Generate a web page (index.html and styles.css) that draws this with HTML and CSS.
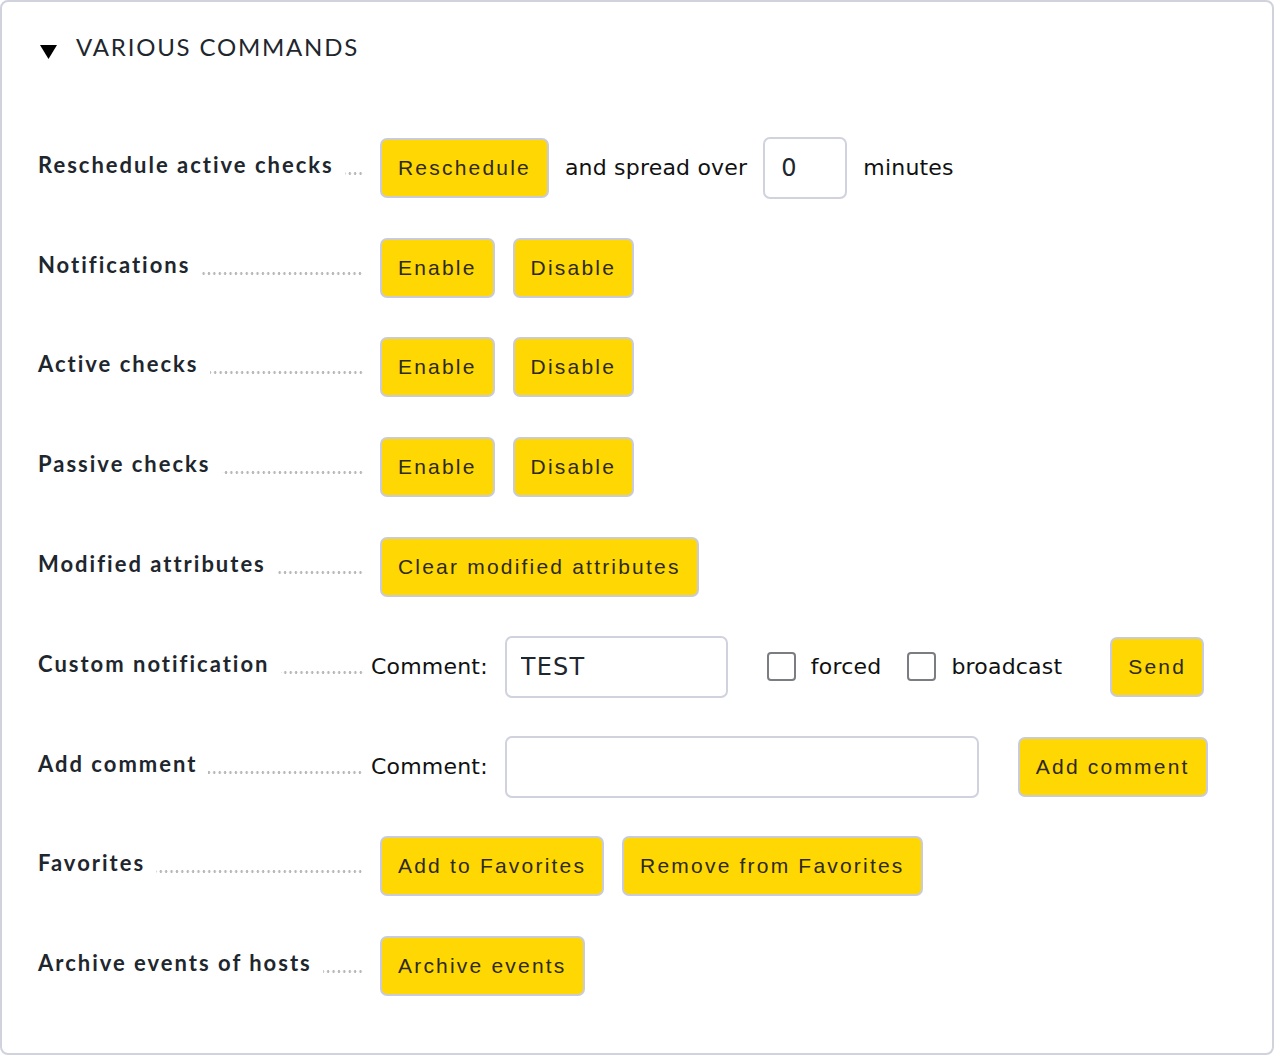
FILE: index.html
```html
<!DOCTYPE html>
<html>
<head>
<meta charset="utf-8">
<link rel="stylesheet" href="styles.css">
</head>
<body>
<div class="panel">
  <div class="header">
    <svg class="tri" width="17" height="14" viewBox="0 0 17 14"><polygon points="0,0 17,0 8.5,14" fill="#000"/></svg>
    <span class="title">VARIOUS COMMANDS</span>
  </div>
  <div class="rows">
    <div class="row">
      <div class="label"><span class="ltext">Reschedule active checks</span><span class="dots"></span></div>
      <div class="content">
        <button class="btn first">Reschedule</button>
        <span class="txt m16">and spread over</span>
        <input class="inp w-num m16" value="0">
        <span class="txt m16">minutes</span>
      </div>
    </div>
    <div class="row">
      <div class="label"><span class="ltext">Notifications</span><span class="dots"></span></div>
      <div class="content">
        <button class="btn first">Enable</button>
        <button class="btn m18">Disable</button>
      </div>
    </div>
    <div class="row">
      <div class="label"><span class="ltext">Active checks</span><span class="dots"></span></div>
      <div class="content">
        <button class="btn first">Enable</button>
        <button class="btn m18">Disable</button>
      </div>
    </div>
    <div class="row">
      <div class="label"><span class="ltext">Passive checks</span><span class="dots"></span></div>
      <div class="content">
        <button class="btn first">Enable</button>
        <button class="btn m18">Disable</button>
      </div>
    </div>
    <div class="row">
      <div class="label"><span class="ltext">Modified attributes</span><span class="dots"></span></div>
      <div class="content">
        <button class="btn first">Clear modified attributes</button>
      </div>
    </div>
    <div class="row">
      <div class="label"><span class="ltext">Custom notification</span><span class="dots"></span></div>
      <div class="content">
        <span class="txt">Comment:</span>
        <input class="inp w-test m17" value="TEST">
        <input type="checkbox" class="chk m39">
        <span class="txt m15">forced</span>
        <input type="checkbox" class="chk m26">
        <span class="txt m15">broadcast</span>
        <button class="btn m48">Send</button>
      </div>
    </div>
    <div class="row">
      <div class="label"><span class="ltext">Add comment</span><span class="dots"></span></div>
      <div class="content">
        <span class="txt">Comment:</span>
        <input class="inp w-comment m17" value="">
        <button class="btn m39">Add comment</button>
      </div>
    </div>
    <div class="row">
      <div class="label"><span class="ltext">Favorites</span><span class="dots"></span></div>
      <div class="content">
        <button class="btn first">Add to Favorites</button>
        <button class="btn m18">Remove from Favorites</button>
      </div>
    </div>
    <div class="row">
      <div class="label"><span class="ltext">Archive events of hosts</span><span class="dots"></span></div>
      <div class="content">
        <button class="btn first">Archive events</button>
      </div>
    </div>
  </div>
</div>
</body>
</html>
```
FILE: styles.css
```css
html, body {
  margin: 0;
  padding: 0;
  background: #fff;
}

.panel {
  box-sizing: border-box;
  width: 1274px;
  height: 1055px;
  border: 2px solid #d0d2de;
  border-radius: 8px;
  background: #fff;
}

.header {
  display: flex;
  align-items: center;
  padding: 31px 0 0 38px;
}

.tri {
  margin: 9px 0 0 0;
  display: block;
}

.title {
  margin-left: 19px;
  font-family: "Lato", sans-serif;
  font-size: 24px;
  letter-spacing: 1.8px;
  color: #1e262e;
  line-height: 1.2;
}

.rows {
  display: flex;
  flex-direction: column;
  gap: 37.8px;
  margin-top: 75px;
  padding-left: 36px;
}

.row {
  display: flex;
  align-items: flex-start;
}

.label {
  width: 325px;
  display: flex;
  align-items: flex-start;
  padding-top: 15px;
  flex-shrink: 0;
}

.ltext {
  font-family: "Lato", sans-serif;
  font-weight: bold;
  font-size: 22px;
  letter-spacing: 2px;
  line-height: 1.2;
  color: #1e262e;
  white-space: nowrap;
}

.dots {
  flex: 1;
  height: 3px;
  margin: 20px 0 0 11px;
  background-image: radial-gradient(circle, #b8b8b8 1.1px, transparent 1.5px);
  background-size: 5.4px 3px;
  background-repeat: repeat-x;
  background-position: right center;
}

.content {
  margin-left: 8px;
  height: 62px;
  display: flex;
  align-items: center;
}

.txt {
  font-family: "DejaVu Sans", sans-serif;
  font-size: 22px;
  letter-spacing: 0.2px;
  color: #111;
  white-space: nowrap;
}

.btn {
  box-sizing: border-box;
  height: 60px;
  padding: 0 16px;
  border: 2px solid #c9cbd9;
  border-radius: 7px;
  background: #ffd703;
  font-family: "Liberation Sans", Arial, sans-serif;
  font-size: 21px;
  letter-spacing: 2.2px;
  color: #2e2a1e;
  white-space: nowrap;
  cursor: pointer;
}

.inp {
  box-sizing: border-box;
  height: 62px;
  padding: 0 14px;
  border: 2px solid #d0d2de;
  border-radius: 7px;
  background: #fff;
  font-family: "DejaVu Sans", sans-serif;
  font-size: 24px;
  letter-spacing: 1.2px;
  color: #1e262e;
  outline: none;
}

.w-num { width: 84px; padding-left: 16px; }
.w-test { width: 223px; }
.w-comment { width: 474px; }

.chk {
  appearance: none;
  -webkit-appearance: none;
  box-sizing: border-box;
  width: 29px;
  height: 29px;
  margin-top: 0;
  margin-bottom: 0;
  margin-right: 0;
  border: 2px solid #7b7d82;
  border-radius: 4px;
  background: #fff;
}

.first { margin-left: 9px; }
.m15 { margin-left: 15px; }
.m16 { margin-left: 16px; }
.m17 { margin-left: 17px; }
.m18 { margin-left: 18px; }
.m26 { margin-left: 26px; }
.m39 { margin-left: 39px; }
.m48 { margin-left: 48px; }
```
